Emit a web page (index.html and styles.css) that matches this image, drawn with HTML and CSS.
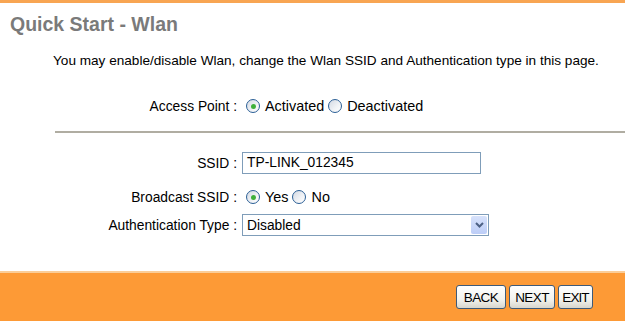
FILE: index.html
```html
<!DOCTYPE html>
<html>
<head>
<meta charset="utf-8">
<link rel="stylesheet" href="styles.css">
</head>
<body>
<div class="page">
  <div class="topbar"></div>
  <h1 class="title">Quick Start - Wlan</h1>
  <p class="desc">You may enable/disable Wlan, change the Wlan SSID and Authentication type in this page.</p>
  <div class="form">
    <div class="row ap">
      <div class="label">Access Point :</div>
      <div class="field">
        <span class="radio checked"></span><span class="opt">Activated</span>
        <span class="radio"></span><span class="opt">Deactivated</span>
      </div>
    </div>
  </div>
  <div class="divider"></div>
  <div class="form">
    <div class="row ssid">
      <div class="label">SSID :</div>
      <div class="field"><div class="input">TP-LINK_012345</div></div>
    </div>
    <div class="row bc">
      <div class="label">Broadcast SSID :</div>
      <div class="field">
        <span class="radio checked"></span><span class="opt">Yes</span>
        <span class="radio"></span><span class="opt">No</span>
      </div>
    </div>
    <div class="row auth">
      <div class="label">Authentication Type :</div>
      <div class="field">
        <div class="select"><span class="selval">Disabled</span><span class="arrow"><svg width="9" height="6" viewBox="0 0 9 6"><path d="M1 1 L4.5 4.5 L8 1" fill="none" stroke="#4d6185" stroke-width="2"/></svg></span></div>
      </div>
    </div>
  </div>
  <div class="spacer"></div>
  <div class="footer">
    <div class="buttons">
      <button class="btn btn-back">BACK</button>
      <button class="btn btn-next">NEXT</button>
      <button class="btn btn-exit">EXIT</button>
    </div>
  </div>
</div>
</body>
</html>
```

FILE: styles.css
```css
html, body {
  margin: 0;
  padding: 0;
  background: #ffffff;
}
.page {
  width: 625px;
  height: 321px;
  display: flex;
  flex-direction: column;
  font-family: "Liberation Sans", Arial, sans-serif;
  font-size: 13.8px;
  color: #000;
}
.topbar {
  height: 3px;
  background: #f8a552;
}
.title {
  margin: 10px 0 0 10px;
  font-size: 19.5px;
  font-weight: bold;
  color: #7a7a7a;
  line-height: 22px;
}
.desc {
  margin: 18px 0 0 53px;
  font-size: 13.6px;
  line-height: 16px;
}
.form {
  display: flex;
  flex-direction: column;
}
.row {
  display: flex;
  align-items: center;
}
.label {
  width: 237px;
  text-align: right;
  flex-shrink: 0;
}
.field {
  margin-left: 5px;
  display: flex;
  align-items: center;
}
.ap {
  margin-top: 26px;
  height: 22px;
}
.divider {
  margin: 14px 0 0 55px;
  height: 2px;
  background: #b0ada2;
}
.ssid {
  margin-top: 19px;
  height: 22px;
}
.bc {
  margin-top: 12px;
  height: 22px;
}
.auth {
  margin-top: 6px;
  height: 22px;
}
.radio {
  width: 12px;
  height: 12px;
  border-radius: 50%;
  border: 1px solid #2b5f96;
  background: linear-gradient(135deg, #d3d9e3 0%, #f1f3f6 60%, #ffffff 100%);
  margin: 0 5px 0 4px;
  position: relative;
  display: inline-block;
}
.radio.checked::after {
  content: "";
  position: absolute;
  left: 3.5px;
  top: 3.5px;
  width: 5px;
  height: 5px;
  border-radius: 50%;
  background: #3fb03a;
}
.opt {
  font-size: 14.4px;
}
.input {
  width: 229px;
  height: 20px;
  border: 1px solid #7f9db9;
  padding: 0 4px;
  line-height: 20px;
  box-sizing: content-box;
}
.select {
  width: 245px;
  height: 20px;
  border: 1px solid #7f9db9;
  display: flex;
  align-items: center;
  justify-content: space-between;
}
.selval {
  padding-left: 4px;
}
.arrow {
  width: 16px;
  height: 18px;
  margin-right: 1px;
  border-radius: 2px;
  background: linear-gradient(180deg, #d7e2fb 0%, #bccdf7 100%);
  display: flex;
  align-items: center;
  justify-content: center;
}
.spacer {
  flex: 1;
}
.footer {
  height: 48px;
  background: #fd9a36;
  border-top: 2px solid #fbcd98;
  display: flex;
  justify-content: flex-end;
  align-items: flex-start;
}
.buttons {
  display: flex;
  gap: 3px;
  margin: 12px 32px 0 0;
}
.btn {
  font-family: "Liberation Sans", Arial, sans-serif;
  font-size: 13.5px;
  height: 24px;
  padding: 0;
  border: 1px solid #3e5a78;
  border-radius: 3px;
  background: linear-gradient(180deg, #ffffff 0%, #f3f3ef 60%, #d8d6cc 100%);
  color: #000;
  letter-spacing: -0.6px;
  text-align: center;
}
.btn-back { width: 50px; }
.btn-next { width: 46px; }
.btn-exit { width: 35px; letter-spacing: -0.9px; }
```
